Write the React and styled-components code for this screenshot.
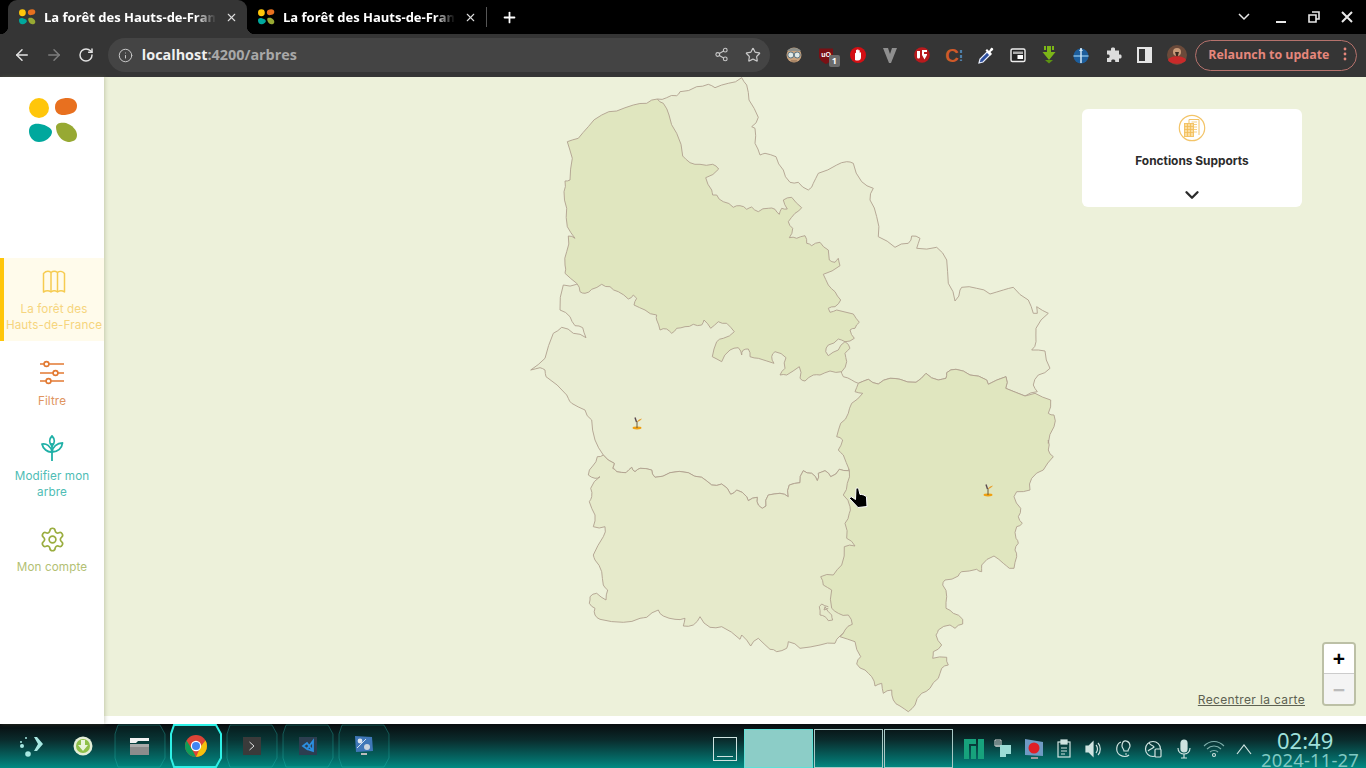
import React from 'react';
import styled, { createGlobalStyle } from 'styled-components';
import { Settings, ChevronDown, X, Plus, ArrowLeft, ArrowRight, RotateCw, Info, Share2, Star } from 'lucide-react';

const GlobalStyle = createGlobalStyle`
  html, body { margin: 0; padding: 0; background: #fff; }
  #root { width: 1366px; height: 768px; overflow: hidden; }
  * { box-sizing: border-box; }
`;

const uiFont = '"Open Sans", "Noto Sans", sans-serif';
const appFont = 'Inter, "Liberation Sans", sans-serif';

// traced map outlines, read off the crops : origin + coords / 3
const from = (ox, oy) => (pts) => pts.map(([x, y]) => [ox + x / 3, oy + y / 3]);
const topCrop = from(520, 75);
const eastCrop = from(780, 150);
const westCrop = from(520, 380);
const southCrop = from(810, 440);

// small wobble between traced points, same result whichever way the edge runs
const wobble = (a, b) => {
  const [p, q] = a[0] < b[0] || (a[0] === b[0] && a[1] < b[1]) ? [a, b] : [b, a];
  const dx = q[0] - p[0];
  const dy = q[1] - p[1];
  const len = Math.hypot(dx, dy);
  if (len < 5) return [];
  const amount = Math.sin(p[0] * 12.9 + p[1] * 78.2 + q[0] * 3.7) * Math.min(1.4, len * 0.12);
  return [[p[0] + dx / 2 - (dy / len) * amount, p[1] + dy / 2 + (dx / len) * amount]];
};
const toPath = (pts, open) => {
  const out = [];
  pts.forEach((pt, i) => {
    out.push(pt);
    const next = pts[i + 1] || (open ? null : pts[0]);
    if (next) out.push(...wobble(pt, next));
  });
  return 'M' + out.map(([x, y]) => `${x.toFixed(1)} ${y.toFixed(1)}`).join('L') + (open ? '' : 'Z');
};

const calaisOutline = topCrop([[412,72],[430,85],[447,120],[470,175],[488,243],[510,263],[540,268],[578,268],[596,282],[557,308],[575,345],[578,360],[590,360],[610,380],[640,397],[660,392],[680,403],[695,396],[715,410],[745,400],[765,403],[778,418],[785,400],[802,402],[790,375],[815,367],[845,398],[825,415],[805,440],[818,460],[808,488],[830,490],[855,482],[860,505],[875,512],[900,502],[925,525],[928,555],[945,562],[955,550],[960,572],[910,598],[925,630],[945,650],[962,675],[945,695],[925,700],[930,712],[950,705],[1000,717],[1018,742],[1005,760],[990,765],[1003,790],[975,800],[990,820],[975,835],[980,860],[965,890],[930,888],[900,900],[880,900],[855,918],[840,910],[838,875],[800,900],[780,900],[795,880],[798,848],[765,830],[755,845],[762,865],[715,850],[690,845],[685,822],[670,825],[665,840],[655,818],[630,825],[605,860],[577,845],[590,800],[610,790],[643,770],[620,745],[595,740],[572,760],[552,735],[545,750],[520,748],[495,755],[470,760],[455,775],[440,762],[420,765],[410,735],[410,720],[375,705],[342,690],[350,670],[340,660],[325,672],[295,650],[270,635],[245,628],[215,643],[195,655],[180,650],[170,625],[135,595],[135,570],[140,530],[145,483],[165,490],[142,455],[140,400],[132,350],[135,318],[150,315],[157,250],[142,200],[175,190],[205,155],[245,120],[290,108],[340,90],[380,85]]);
const calaisHole = topCrop([[975,800],[955,792],[925,810],[917,830],[925,842],[955,825]]);

const nordNorth = [
  ...topCrop([[412,72],[440,68],[470,62],[480,50],[530,35],[565,28],[585,38],[625,25],[665,8],[680,30],[687,75],[715,127],[695,155],[705,160],[705,205],[720,240],[735,235],[768,245],[790,285],[810,322],[835,322],[865,345]]),
  ...eastCrop([[100,100],[115,70],[170,45],[200,35],[220,40],[245,95],[280,115],[270,150],[290,200],[295,260],[345,292],[385,280],[395,258],[420,265],[410,295],[470,292],[500,330],[505,400],[525,453],[540,420],[545,412],[590,415],[630,432],[670,420],[700,412],[745,450],[760,490],[772,490],[770,470],[805,490],[768,535],[768,575],[755,600],[795,603],[810,655],[775,675],[760,705],[772,725]]),
];
const sharedEdge = eastCrop([[235,700],[265,688],[295,702],[330,685],[360,688],[408,697],[438,670],[475,690],[498,685],[500,668],[528,658],[570,675],[620,690],[625,703],[678,680],[677,715],[735,738]]);
const nordOutline = [...nordNorth, ...[...sharedEdge].reverse(), ...eastCrop([[215,690],[190,680],[185,670],[170,600]]), [820, 340], [700, 200]];

const sommeEast = westCrop([[250,225],[283,250],[278,265],[290,275],[318,278],[335,262],[345,275],[360,265],[395,270],[405,292],[450,278],[505,278],[545,292],[575,315],[605,312],[632,343],[650,330],[680,350],[685,362],[712,352],[715,375],[727,385],[738,378],[745,345],[780,340],[805,350],[808,315],[840,308],[850,272],[875,280],[892,302],[895,280],[915,272],[932,290],[958,268],[985,272]]);
const sommeOutline = [
  ...topCrop([[170,628],[130,630],[120,705],[150,725],[165,752],[188,758],[198,788],[160,775],[125,757],[100,775],[75,850],[32,885],[60,878],[75,885],[78,905],[140,960]]),
  ...westCrop([[145,55],[155,70],[195,90],[215,120],[225,180]]),
  ...sommeEast, [860, 440], [870, 385], [800, 330], [600, 270],
];

const oiseOutline = [
  ...westCrop([[250,225],[232,230],[218,258],[205,285],[225,295],[240,290],[212,325],[215,350],[208,365],[225,405],[220,440],[255,440],[250,470],[220,525],[225,540],[245,575],[250,615],[263,630],[258,660],[230,640],[210,650],[208,670],[225,685],[225,705],[240,718],[310,727],[360,715],[380,712],[415,690],[430,708],[465,718],[495,715],[490,738],[520,735],[540,710],[570,742],[605,740],[660,778],[665,765],[692,798],[715,775],[750,808],[770,815],[800,805],[805,785],[840,805],[900,795],[945,790],[960,768],[1040,700],[1040,300]]),
  ...[...sommeEast].reverse().slice(0, -1),
];
const oiseLoop = westCrop([[925,680],[905,672],[898,680],[900,705],[915,710],[925,722],[938,720],[935,705],[915,680],[912,690],[925,685]]);

const aisneOutline = [
  ...sharedEdge,
  ...eastCrop([[765,730],[812,750],[805,790],[822,795],[822,830],[805,880]]),
  ...southCrop([[715,0],[715,30],[730,50],[700,90],[665,115],[660,150],[620,155],[612,170],[632,205],[625,230],[637,250],[620,260],[618,295],[625,310],[615,330],[620,350],[612,385],[598,385],[580,370],[552,348],[515,375],[515,395],[500,388],[455,395],[445,408],[405,420],[398,435],[410,470],[408,505],[430,520],[458,538],[458,552],[435,565],[420,555],[385,570],[378,585],[395,615],[370,635],[368,655],[410,652],[415,675],[395,685],[385,715],[360,745],[335,760],[315,795],[295,815],[270,798],[250,780],[245,750],[220,760],[215,730],[195,738],[185,710],[165,690],[140,672],[152,650],[135,605],[90,590],[105,570],[127,553],[115,525],[85,520],[65,505],[65,450],[40,435],[32,410],[70,405],[95,375],[103,320],[135,318],[110,295],[105,250],[118,220],[120,200],[100,165],[112,130],[118,90],[100,45],[85,30],[98,0]]),
  ...eastCrop([[170,860],[182,820],[205,790],[215,760],[248,730],[225,725]]),
];

/* ---------- browser chrome ---------- */
const TabStrip = styled.div`
  height: 34px;
  background: #000;
  display: flex;
  align-items: stretch;
  padding-left: 8px;
  color: #fff;
  font-family: ${uiFont};
`;
const Tab = styled.div`
  position: relative;
  width: 239px;
  display: flex;
  align-items: center;
  padding: 0 9px 0 11px;
  border-radius: 9px 9px 0 0;
  background: ${(p) => (p.$active ? '#353535' : 'transparent')};
  ${(p) => p.$active && `
    &::before, &::after {
      content: '';
      position: absolute;
      bottom: 0;
      width: 8px;
      height: 8px;
    }
    &::before { left: -8px; background: radial-gradient(circle at 0 0, #000 8px, #353535 8.5px); }
    &::after { right: -8px; background: radial-gradient(circle at 100% 0, #000 8px, #353535 8.5px); }
  `}
`;
const TabTitle = styled.span`
  flex: 1;
  margin: 0 9px 0 8px;
  font-size: 13px;
  font-weight: 700;
  white-space: nowrap;
  overflow: hidden;
  -webkit-mask-image: linear-gradient(90deg, #000 88%, transparent 100%);
  mask-image: linear-gradient(90deg, #000 88%, transparent 100%);
`;
const TabDivider = styled.div`
  width: 1px;
  height: 20px;
  margin: 7px 0 0 0;
  background: #555;
`;
const NewTab = styled.div`
  width: 44px;
  display: flex;
  align-items: center;
  justify-content: center;
`;
const WindowButtons = styled.div`
  margin-left: auto;
  display: flex;
  align-items: center;
  padding-right: 10px;
  gap: 15px;
`;
const WindowButton = styled.svg`
  width: 18px;
  height: 18px;
  fill: none;
  stroke: #e8e8e8;
  stroke-width: ${(p) => p.$weight || 2};
  margin-right: ${(p) => p.$after || 0}px;
`;
const Toolbar = styled.div`
  height: 43px;
  background: #353535;
  display: flex;
  align-items: center;
  padding: 0 9px 1px 6px;
  color: #d8d8d8;
  font-family: ${uiFont};
`;
const NavButton = styled.div`
  width: 32px;
  display: flex;
  justify-content: center;
  color: ${(p) => (p.$off ? '#7d7d7d' : '#e3e3e3')};
`;
const Omnibox = styled.div`
  width: 663px;
  height: 34px;
  margin: 0 8px 0 6px;
  border-radius: 17px;
  background: #444;
  display: flex;
  align-items: center;
  padding: 0 9px 0 10px;
  font-size: 14.4px;
  font-weight: 700;
`;
const Host = styled.span`
  color: #f0f0f0;
  margin: 0 0 2px 9px;
`;
const Port = styled.span`
  color: #a8a8a8;
`;
const OmniIcons = styled.div`
  margin-left: auto;
  display: flex;
  gap: 16px;
  color: #c8c8c8;
`;
const Extension = styled.div`
  position: relative;
  width: 32px;
  display: flex;
  justify-content: center;
`;
const Badge = styled.span`
  position: absolute;
  left: 19px;
  top: 10px;
  width: 11px;
  height: 12px;
  border-radius: 2px;
  background: #6b6b6b;
  color: #fff;
  font-size: 9px;
  line-height: 12px;
  text-align: center;
  font-weight: 700;
`;
const Relaunch = styled.div`
  margin-left: 2px;
  width: 162px;
  height: 31px;
  border: 1px solid #b5726c;
  border-radius: 16px;
  display: flex;
  align-items: center;
  padding: 0 5px 2px 12px;
  color: #e5877c;
  font-size: 12.4px;
  font-weight: 700;
  white-space: nowrap;
`;
const Dots = styled.svg`
  margin-left: auto;
  width: 12px;
  height: 14px;
  fill: #e5877c;
`;

/* ---------- app ---------- */
const Page = styled.div`
  height: 647px;
  display: flex;
  align-items: stretch;
  background: #fff;
  font-family: ${appFont};
`;
const Sidebar = styled.aside`
  position: relative;
  z-index: 2;
  width: 104px;
  flex-shrink: 0;
  background: #fff;
  box-shadow: 1px 0 4px rgba(120, 125, 90, 0.35);
  display: flex;
  flex-direction: column;
`;
const LogoBox = styled.div`
  height: 181px;
  padding: 20px 0 0 29px;
`;
const Nav = styled.nav`
  display: flex;
  flex-direction: column;
  gap: 8px;
`;
const NavItem = styled.div`
  display: flex;
  flex-direction: column;
  align-items: center;
  padding: 9px 0 8px;
  font-size: 11.7px;
  line-height: 16px;
  letter-spacing: 0.1px;
  text-align: center;
  color: ${(p) => p.$color};
  ${(p) => p.$active && `
    background: #fffbeb;
    border-left: 4px solid #ffc60a;
    margin-bottom: 1px;
  `}
`;
const NavIcon = styled.div`
  height: 28px;
  margin-bottom: 6px;
  color: ${(p) => p.$color};
  display: flex;
  align-items: center;
`;
const MapArea = styled.main`
  position: relative;
  flex: 1;
  height: 639px;
  background: #edf1da;
  overflow: hidden;
`;
const MapSvg = styled.svg`
  display: block;
  width: 100%;
  height: 100%;
`;
const Region = styled.path`
  fill: ${(p) => p.$fill};
  stroke: #b0a08e;
  stroke-width: 0.9;
  stroke-linejoin: round;
`;
const CategoryCard = styled.div`
  position: absolute;
  top: 32px;
  right: 64px;
  width: 220px;
  height: 98px;
  border-radius: 6px;
  background: #fff;
  display: flex;
  flex-direction: column;
  align-items: center;
  padding-top: 5px;
  color: #2b2b2b;
`;
const CategoryName = styled.div`
  margin-top: 11px;
  font-size: 11.9px;
  font-weight: 700;
  line-height: 16px;
`;
const CardChevron = styled.div`
  margin-top: 15px;
  height: 22px;
  display: flex;
  align-items: center;
`;
const ZoomBox = styled.div`
  position: absolute;
  right: 10px;
  bottom: 10px;
  width: 34px;
  border: 2px solid #bcc0a6;
  border-radius: 4px;
  overflow: hidden;
`;
const ZoomButton = styled.div`
  height: 30px;
  display: flex;
  align-items: center;
  justify-content: center;
  background: ${(p) => (p.$off ? '#f4f4f4' : '#fff')};
  color: ${(p) => (p.$off ? '#bbb' : '#000')};
  border-bottom: ${(p) => (p.$off ? 'none' : '1px solid #ccc')};
  font: 700 21px/1 "Liberation Sans", sans-serif;
`;
const Recenter = styled.a`
  position: absolute;
  right: 61px;
  bottom: 8px;
  font-size: 12px;
  line-height: 16px;
  color: #5d6152;
  text-decoration: underline;
  letter-spacing: 0.35px;
`;

/* ---------- taskbar ---------- */
const Taskbar = styled.div`
  height: 44px;
  display: flex;
  align-items: stretch;
  background: linear-gradient(180deg, #080c0e 0%, #0a2a2b 35%, #046a66 80%, #008b83 100%);
  font-family: ${uiFont};
`;
const Launcher = styled.div`
  width: 114px;
  flex-shrink: 0;
  display: flex;
  align-items: center;
  padding-left: 18px;
  gap: 27px;
`;
const Tiles = styled.div`
  display: flex;
  gap: 4px;
`;
const TileBox = styled.div`
  position: relative;
  width: 52px;
  display: flex;
  align-items: center;
  justify-content: center;
`;
const TileFrame = styled.svg`
  position: absolute;
  inset: 0;
  width: 52px;
  height: 44px;
  fill: ${(p) => (p.$active ? 'rgba(0,140,135,.25)' : 'rgba(0,120,115,.12)')};
  stroke: ${(p) => (p.$active ? '#2ff0e6' : 'rgba(40,190,180,.35)')};
  stroke-width: ${(p) => (p.$active ? 2 : 1)};
`;
const TileIcon = styled.svg`
  position: relative;
`;
const DesktopButton = styled.div`
  margin-left: 323px;
  width: 24px;
  height: 24px;
  align-self: center;
  margin-top: 6px;
  border: 1px solid #cfe3e0;
  display: flex;
  align-items: flex-end;
  padding: 0 3px 3px;
  &::after { content: ''; width: 100%; height: 1px; background: #cfe3e0; }
`;
const Pager = styled.div`
  margin-left: 7px;
  padding-top: 5px;
  display: flex;
  gap: 1px;
`;
const Desk = styled.div`
  width: 69px;
  border: 1px solid ${(p) => (p.$active ? '#5fe0d6' : '#a9c9c6')};
  background: ${(p) => (p.$active ? '#8ccdc7' : 'transparent')};
`;
const Tray = styled.div`
  margin-left: 6px;
  display: flex;
  align-items: center;
  padding-top: 6px;
`;
const TraySlot = styled.div`
  width: 30px;
  display: flex;
  justify-content: center;
`;
const Clock = styled.div`
  margin-left: 2px;
  width: 105px;
  color: #9fe0da;
  font-family: "Noto Sans", sans-serif;
  white-space: nowrap;
`;
const ClockTime = styled.div`
  font-size: 22px;
  line-height: 22px;
  margin-top: 5px;
  padding-left: 16px;
`;
const ClockDate = styled.div`
  font-size: 18.4px;
  line-height: 16px;
  margin-top: 1px;
  letter-spacing: 0.2px;
  color: #7fc9c3;
`;

/* ---------- drawings ---------- */
const Logo = ({ size = 50 }) => (
  <svg width={size} height={size * 0.94} viewBox="0 0 50 47">
    <circle cx="10" cy="11" r="10" fill="#ffc60a" />
    <path d="M26 10C26 3 32 1 39 1C45 1 48 5 48 9C48 15 43 17 36 18C30 18.5 26 16 26 10Z" fill="#e8701f" />
    <path d="M0 34C0 28 5 26 11 27C17 28 23 31 23 35C23 40 16 45 10 45C4 45 0 40 0 34Z" fill="#00a89d" />
    <path d="M27 30C27 26 32 25 37 26C43 28 48 33 48 38C48 43 44 45 39 45C32 44 27 37 27 30Z" fill="#97a933" />
  </svg>
);

const Sprout = ({ x, y }) => (
  <g transform={`translate(${x} ${y})`}>
    <ellipse cx="0" cy="5" rx="4.5" ry="1.4" fill="#f0a010" />
    <path d="M0 5V-2" stroke="#6b5a3a" strokeWidth="1" />
    <path d="M-.5 -1L-2 -5.5" stroke="#5c4a50" strokeWidth="1.4" />
    <path d="M0 -1C1 -3.5 3 -4 5 -4.5C4 -2.5 2 -1.5 0 -1Z" fill="#e8a030" />
  </g>
);

const MapIcon = () => (
  <svg width="28" height="28" viewBox="0 0 28 28" fill="none" stroke="currentColor" strokeWidth="1.5" strokeLinejoin="round">
    <path d="M3.5 6.5C6 4 9 4 11 5.5C13 4 15.5 4 17.5 5.5C19.5 4 22.5 4 24.5 6.5V25C22.5 23.5 19.5 23.5 17.5 25C15.5 23.5 13 23.5 11 25C9 23.5 6 23.5 3.5 25Z" />
    <path d="M11 5.5V25M17.5 5.5V25" />
  </svg>
);

const FilterIcon = () => (
  <svg width="28" height="28" viewBox="0 0 28 28" fill="none" stroke="currentColor" strokeWidth="1.6">
    <path d="M2 5H6M11 5H26M2 14H15M20 14H26M2 22H8M13 22H26" />
    <circle cx="8.5" cy="5" r="2.4" />
    <circle cx="17.5" cy="14" r="2.4" />
    <circle cx="10.5" cy="22" r="2.4" />
  </svg>
);

const PlantIcon = () => (
  <svg width="28" height="28" viewBox="0 0 28 28" fill="none" stroke="currentColor" strokeWidth="1.8" strokeLinejoin="round">
    <path d="M14 27V9" />
    <path d="M14 12C11 9 11 5 14 2C17 5 17 9 14 12Z" />
    <path d="M14 18C9.5 18.5 5 15 4 10C8 9 13 12 14 18Z" />
    <path d="M14 18C14.5 13 19 9 24.5 9C24 14 20 18 14 18Z" />
  </svg>
);

const BuildingIcon = () => (
  <svg width="28" height="28" viewBox="0 0 28 28" fill="none" stroke="#f3c468" strokeWidth="1">
    <circle cx="14" cy="14" r="12.7" strokeWidth="1.2" />
    <path d="M11 9V5.5H21V21" />
    <path d="M13.5 8H19M13.5 10.5H19M13.5 13H19M13.5 15.5H19M13.5 18H19" strokeWidth=".8" />
    <rect x="6.5" y="9.5" width="9" height="13" fill="#fbdc9e" />
    <path d="M6.5 12.5H15.5M6.5 15.5H15.5M6.5 18.5H15.5M9.5 9.5V22.5M12.5 9.5V22.5" stroke="#f3bd55" strokeWidth=".8" />
  </svg>
);

const ext = { width: 20, height: 20, viewBox: '0 0 20 20' };
const extensions = [
  <svg {...ext}><circle cx="10" cy="10" r="7.5" fill="#c9a27c" /><path d="M3 6C5 2 15 2 17 6Z" fill="#8d8f8a" /><circle cx="6.8" cy="10" r="3" fill="#dfe8e6" stroke="#5e7480" /><circle cx="13.2" cy="10" r="3" fill="#dfe8e6" stroke="#5e7480" /><path d="M7 16H13" stroke="#8a6a50" /></svg>,
  <svg {...ext}><path d="M3 3.5H17V11C17 15 13 17.5 10 19C7 17.5 3 15 3 11Z" fill="#7a1014" /><text x="10" y="11.5" fontSize="7" fontWeight="700" fill="#fff" textAnchor="middle" fontFamily="Liberation Sans">uO</text></svg>,
  <svg {...ext}><circle cx="10" cy="10" r="8" fill="#d40f14" /><path d="M7 15V8.5C7 7.5 8 7.5 8 8.5V5.5C8 4.5 9.2 4.5 9.2 5.5V5C9.2 4 10.5 4 10.5 5V5.8C10.5 4.8 11.7 4.8 11.7 5.8V8C11.7 7 13 7 13 8V12C13 14 12 15.5 10 15.5H8Z" fill="#fff" /></svg>,
  <svg {...ext}><path d="M3 3H8L10 9L12 3H17L11 18H9Z" fill="#8f8f8f" /></svg>,
  <svg {...ext}><circle cx="10" cy="10" r="7.8" fill="#b81a1d" /><path d="M5 6V12C5 14 8 14 8 12V6Z" fill="#fff" /><path d="M10 5H15V7H12V9H15V10L12.5 14.5L10 10Z" fill="#fff" /></svg>,
  <svg {...ext}><text x="1" y="16.5" fontSize="19" fontWeight="700" fill="#cf5a28" fontFamily="Liberation Sans">C</text><path d="M17 5V8M17 10V13M17 14.5V16" stroke="#4f7fa8" strokeWidth="2.2" /></svg>,
  <svg {...ext}><path d="M3 18L4 14L11 7L14 10L7 17Z" fill="#2d4f9e" stroke="#e8eefc" strokeWidth="1.2" /><path d="M11 4L13 6L15 3C16 2 18 4 17 5L14.5 7L16 9L14.5 10.5L9.5 5.5Z" fill="#fff" /></svg>,
  <svg {...ext}><rect x="3" y="4" width="14" height="12.5" rx="1.5" fill="#222" stroke="#eee" strokeWidth="1.4" /><rect x="5" y="6.5" width="10" height="2.5" fill="#aaa" /><rect x="9.5" y="10" width="5.5" height="4" fill="#fff" /></svg>,
  <svg {...ext}><path d="M5 1H7V5H5ZM8 1H12V7H16.5L10 15L3.5 7H8ZM13 1H15V5H13Z" fill="#7cb518" /><path d="M6 15H14L10 18.5Z" fill="#5d9412" /></svg>,
  <svg {...ext}><circle cx="10" cy="11" r="7.5" fill="#1d5e9c" /><path d="M2.5 11H17.5" stroke="#7fb9e0" strokeWidth="1.5" /><path d="M10 3V18" stroke="#cfe6f5" strokeWidth="1.5" /><path d="M8 6L10 3L12 6Z" fill="#cfe6f5" /></svg>,
  <svg {...ext}><path d="M8 3.5C8 2 12 2 12 3.5V5.5H16V9.5H17.5C19 9.5 19 13.5 17.5 13.5H16V17H12.2V15.5C12.2 14 8.3 14 8.3 15.5V17H4V13H5.5C7 13 7 9.5 5.5 9.5H4V5.5H8Z" fill="#dcdcdc" /></svg>,
  <svg {...ext}><rect x="3" y="3" width="13" height="14" fill="none" stroke="#e4e4e4" strokeWidth="2" /><rect x="10" y="3" width="6" height="14" fill="#e4e4e4" /></svg>,
  <svg {...ext}><circle cx="10" cy="10" r="10" fill="#6b4a3a" /><circle cx="10" cy="7" r="4" fill="#c79a78" /><path d="M8 7H12L10.5 12H9.5Z" fill="#3a2a20" /><path d="M1 15C3 10 17 10 19 15C17 20 3 20 1 15Z" fill="#c92a2a" /></svg>,
];

const tiles = [
  <TileIcon width="22" height="20" viewBox="0 0 22 20"><path d="M1 2H20V5H9L7 7H1Z" fill="#f2f2f2" /><path d="M1 8H20V19H1Z" fill="#8c8c8c" /><path d="M1 8H20V11H1Z" fill="#aaa" /></TileIcon>,
  <TileIcon width="24" height="24" viewBox="0 0 24 24"><circle cx="12" cy="12" r="11" fill="#db4437" /><path d="M21.5 6.5A11 11 0 0 1 12 23L17 12Z" fill="#f4c20d" /><path d="M2.5 6.5L7.5 14.5L12 23A11 11 0 0 1 2.5 6.5Z" fill="#0f9d58" /><circle cx="12" cy="12" r="5.2" fill="#fff" /><circle cx="12" cy="12" r="4" fill="#4285f4" /></TileIcon>,
  <TileIcon width="18" height="18" viewBox="0 0 18 18"><rect width="18" height="18" fill="#3a3a3a" /><path d="M6.5 5L11 9L6.5 13" fill="none" stroke="#ddd" /></TileIcon>,
  <TileIcon width="18" height="18" viewBox="0 0 18 18"><rect width="18" height="18" fill="#2c3e50" /><path d="M4 9L8 12L14 4V14L8 12L4 9L8 6L14 14" fill="none" stroke="#2b8fe0" strokeWidth="1.8" /></TileIcon>,
  <TileIcon width="22" height="24" viewBox="0 0 22 24"><path d="M2 2L19 3L20 17L3 18Z" fill="#3f77b8" /><circle cx="7" cy="7" r="2.4" fill="#dce6f0" /><circle cx="14" cy="13" r="3" fill="#c9d4de" /><path d="M4 14L13 5" stroke="#cfe0f0" /><path d="M8 19H14V21H8Z" fill="#bbb" /></TileIcon>,
];

const trayStroke = { fill: 'none', stroke: '#cfe3e0', strokeWidth: 1.2 };
const tray = [
  <svg width="20" height="20" viewBox="0 0 20 20"><path d="M1 1H7V7H1Z" fill="none" stroke="#d8d8d8" /><path d="M3 2V8M5 2V8" stroke="#d8d8d8" /><path d="M6 6H17V15H12V18H6Z" fill="#9adcd6" /></svg>,
  <svg width="22" height="22" viewBox="0 0 22 22"><path d="M2 1L20 4V18L2 17Z" fill="#6f9ac4" /><circle cx="11" cy="10" r="5.5" fill="#e01f26" /><path d="M8 19H15V21H8Z" fill="#9a9a9a" /></svg>,
  <svg width="16" height="20" viewBox="0 0 16 20" {...trayStroke}><rect x="2" y="3" width="12" height="15" /><rect x="5" y="1" width="6" height="4" fill="#cfe3e0" /><path d="M5 9H11M5 12H11M5 15H9" /></svg>,
  <svg width="20" height="20" viewBox="0 0 20 20" {...trayStroke}><path d="M2 7H5L9 3V17L5 13H2Z" fill="#cfe3e0" /><path d="M12 6C14 8 14 12 12 14M14 4C17 7 17 13 14 16" /></svg>,
  <svg width="20" height="20" viewBox="0 0 20 20" {...trayStroke}><path d="M7 3C2 5 1 13 6 16C9 18 13 18 15 16" /><path d="M9 3C11 1 16 2 16 7C16 9 14 10 14 12H10C10 10 8 9 8 7C8 5 8.5 4 9 3Z" /><path d="M11 15H13" /></svg>,
  <svg width="20" height="20" viewBox="0 0 20 20" {...trayStroke}><circle cx="9" cy="10" r="7.5" /><path d="M5 4C7 7 9 6 10 8C8 10 6 10 4 12" /><rect x="11" y="10" width="6" height="8" rx="1" fill="#0a4a48" /></svg>,
  <svg width="20" height="20" viewBox="0 0 20 20" {...trayStroke}><rect x="7" y="1" width="6" height="12" rx="3" fill="#cfe3e0" /><path d="M4 9C4 17 16 17 16 9M10 15V19M7 19H13" /></svg>,
  <svg width="24" height="20" viewBox="0 0 24 20" fill="none" stroke="#7fb0ac" strokeWidth="1.1"><path d="M2 7C8 1 16 1 22 7M5 10C9 6 15 6 19 10M8 13C10 11 14 11 16 13" /><circle cx="12" cy="16" r="1.5" stroke="#cfe3e0" /></svg>,
  <svg width="18" height="14" viewBox="0 0 18 14" {...trayStroke}><path d="M2 12L9 3L16 12" /></svg>,
];

const CURSOR = 'M856 488.5C857 487.5 858.5 488 858.8 489.5L860 494.5C862 494 865.5 495.5 866.5 497L867 506.5L858 507.5L849.5 498.5L851 496.5L855.5 499.5Z';

export default function App() {
  return (
    <>
      <GlobalStyle />
      <TabStrip>
        <Tab $active>
          <Logo size={17} />
          <TabTitle>La forêt des Hauts-de-France</TabTitle>
          <X size={13} strokeWidth={2} color="#ddd" />
        </Tab>
        <Tab>
          <Logo size={17} />
          <TabTitle>La forêt des Hauts-de-France</TabTitle>
          <X size={13} strokeWidth={2} color="#ddd" />
        </Tab>
        <TabDivider />
        <NewTab><Plus size={17} strokeWidth={2.5} color="#fff" /></NewTab>
        <WindowButtons>
          <WindowButton viewBox="0 0 18 18" $weight={1.5} $after={4}><path d="M4 6L9 11L14 6" /></WindowButton>
          <WindowButton viewBox="0 0 18 18"><path d="M4 14H14" /></WindowButton>
          <WindowButton viewBox="0 0 18 18" $weight={1.6}><path d="M7 4H14V11H11M4 7H11V14H4Z" /></WindowButton>
          <WindowButton viewBox="0 0 18 18"><path d="M4 4L14 14M14 4L4 14" /></WindowButton>
        </WindowButtons>
      </TabStrip>

      <Toolbar>
        <NavButton><ArrowLeft size={18} strokeWidth={2} /></NavButton>
        <NavButton $off><ArrowRight size={18} strokeWidth={2} /></NavButton>
        <NavButton><RotateCw size={16} strokeWidth={2.2} /></NavButton>
        <Omnibox>
          <Info size={15} strokeWidth={1.6} color="#c8c8c8" />
          <Host>localhost<Port>:4200/arbres</Port></Host>
          <OmniIcons>
            <Share2 size={15} strokeWidth={1.8} />
            <Star size={16} strokeWidth={1.8} />
          </OmniIcons>
        </Omnibox>
        {extensions.map((icon, i) => (
          <Extension key={i}>
            {icon}
            {i === 1 && <Badge>1</Badge>}
          </Extension>
        ))}
        <Relaunch>
          Relaunch to update
          <Dots viewBox="0 0 12 14"><circle cx="6" cy="2" r="1.4" /><circle cx="6" cy="7" r="1.4" /><circle cx="6" cy="12" r="1.4" /></Dots>
        </Relaunch>
      </Toolbar>

      <Page>
        <Sidebar>
          <LogoBox><Logo /></LogoBox>
          <Nav>
            <NavItem $active $color="#f6d57e">
              <NavIcon $color="#f6cb50"><MapIcon /></NavIcon>
              La forêt des<br />Hauts-de-France
            </NavItem>
            <NavItem $color="#e0955f">
              <NavIcon $color="#e27a33"><FilterIcon /></NavIcon>
              Filtre
            </NavItem>
            <NavItem $color="#4fbdb5">
              <NavIcon $color="#1fb0a7"><PlantIcon /></NavIcon>
              Modifier mon<br />arbre
            </NavItem>
            <NavItem $color="#b3bf74">
              <NavIcon $color="#9aad3f"><Settings size={27} strokeWidth={1.5} /></NavIcon>
              Mon compte
            </NavItem>
          </Nav>
        </Sidebar>

        <MapArea>
          <MapSvg viewBox="104 77 1262 639">
            <Region d={toPath(sommeOutline)} $fill="#e9edd3" />
            <Region d={toPath(oiseOutline)} $fill="#e6eacb" />
            <Region d={toPath(nordOutline)} $fill="#e9edd3" />
            <Region d={toPath(aisneOutline)} $fill="#e0e6bf" />
            <Region d={toPath(calaisOutline)} $fill="#e0e6bf" />
            <Region d={toPath(calaisHole)} $fill="#e9edd3" />
            <Region d={toPath(oiseLoop, true)} $fill="none" />
            <Sprout x={637} y={423} />
            <Sprout x={988} y={490} />
            <path d={CURSOR} fill="#000" stroke="#fff" strokeWidth="1" />
          </MapSvg>
          <CategoryCard>
            <BuildingIcon />
            <CategoryName>Fonctions Supports</CategoryName>
            <CardChevron><ChevronDown size={22} strokeWidth={2.6} /></CardChevron>
          </CategoryCard>
          <ZoomBox>
            <ZoomButton>+</ZoomButton>
            <ZoomButton $off>−</ZoomButton>
          </ZoomBox>
          <Recenter>Recentrer la carte</Recenter>
        </MapArea>
      </Page>

      <Taskbar>
        <Launcher>
          <svg width="28" height="26" viewBox="0 0 28 26">
            <circle cx="3" cy="9" r="1" fill="#a8e8e2" />
            <circle cx="4" cy="13" r="2" fill="#a8e8e2" />
            <circle cx="10" cy="21" r="2.8" fill="#a8e8e2" />
            <circle cx="8" cy="5" r="1" fill="#a8e8e2" />
            <path d="M16 4L19 4L25 11L19 18L16 18L20 11Z" fill="#a8e8e2" />
          </svg>
          <svg width="20" height="20" viewBox="0 0 20 20">
            <circle cx="10" cy="10" r="9.5" fill="#e4efd8" />
            <circle cx="10" cy="10" r="7" fill="#8ec04a" />
            <path d="M8 4H12V9H15L10 15L5 9H8Z" fill="#e8f4dc" />
          </svg>
        </Launcher>
        <Tiles>
          {tiles.map((icon, i) => (
            <TileBox key={i}>
              <TileFrame $active={i === 1} viewBox="0 0 52 44">
                <path d="M4 1H46L51 10V34L46 43H4L1 34V10Z" />
              </TileFrame>
              {icon}
            </TileBox>
          ))}
        </Tiles>
        <DesktopButton />
        <Pager>
          <Desk $active />
          <Desk />
          <Desk />
        </Pager>
        <Tray>
          <TraySlot>
            <svg width="22" height="20" viewBox="0 0 22 20" fill="#17a27c"><path d="M1 0H13V5H6V20H1ZM8 7H13V20H8ZM15 0H21V20H15Z" /></svg>
          </TraySlot>
          {tray.map((icon, i) => <TraySlot key={i}>{icon}</TraySlot>)}
        </Tray>
        <Clock>
          <ClockTime>02:49</ClockTime>
          <ClockDate>2024-11-27</ClockDate>
        </Clock>
      </Taskbar>
    </>
  );
}
